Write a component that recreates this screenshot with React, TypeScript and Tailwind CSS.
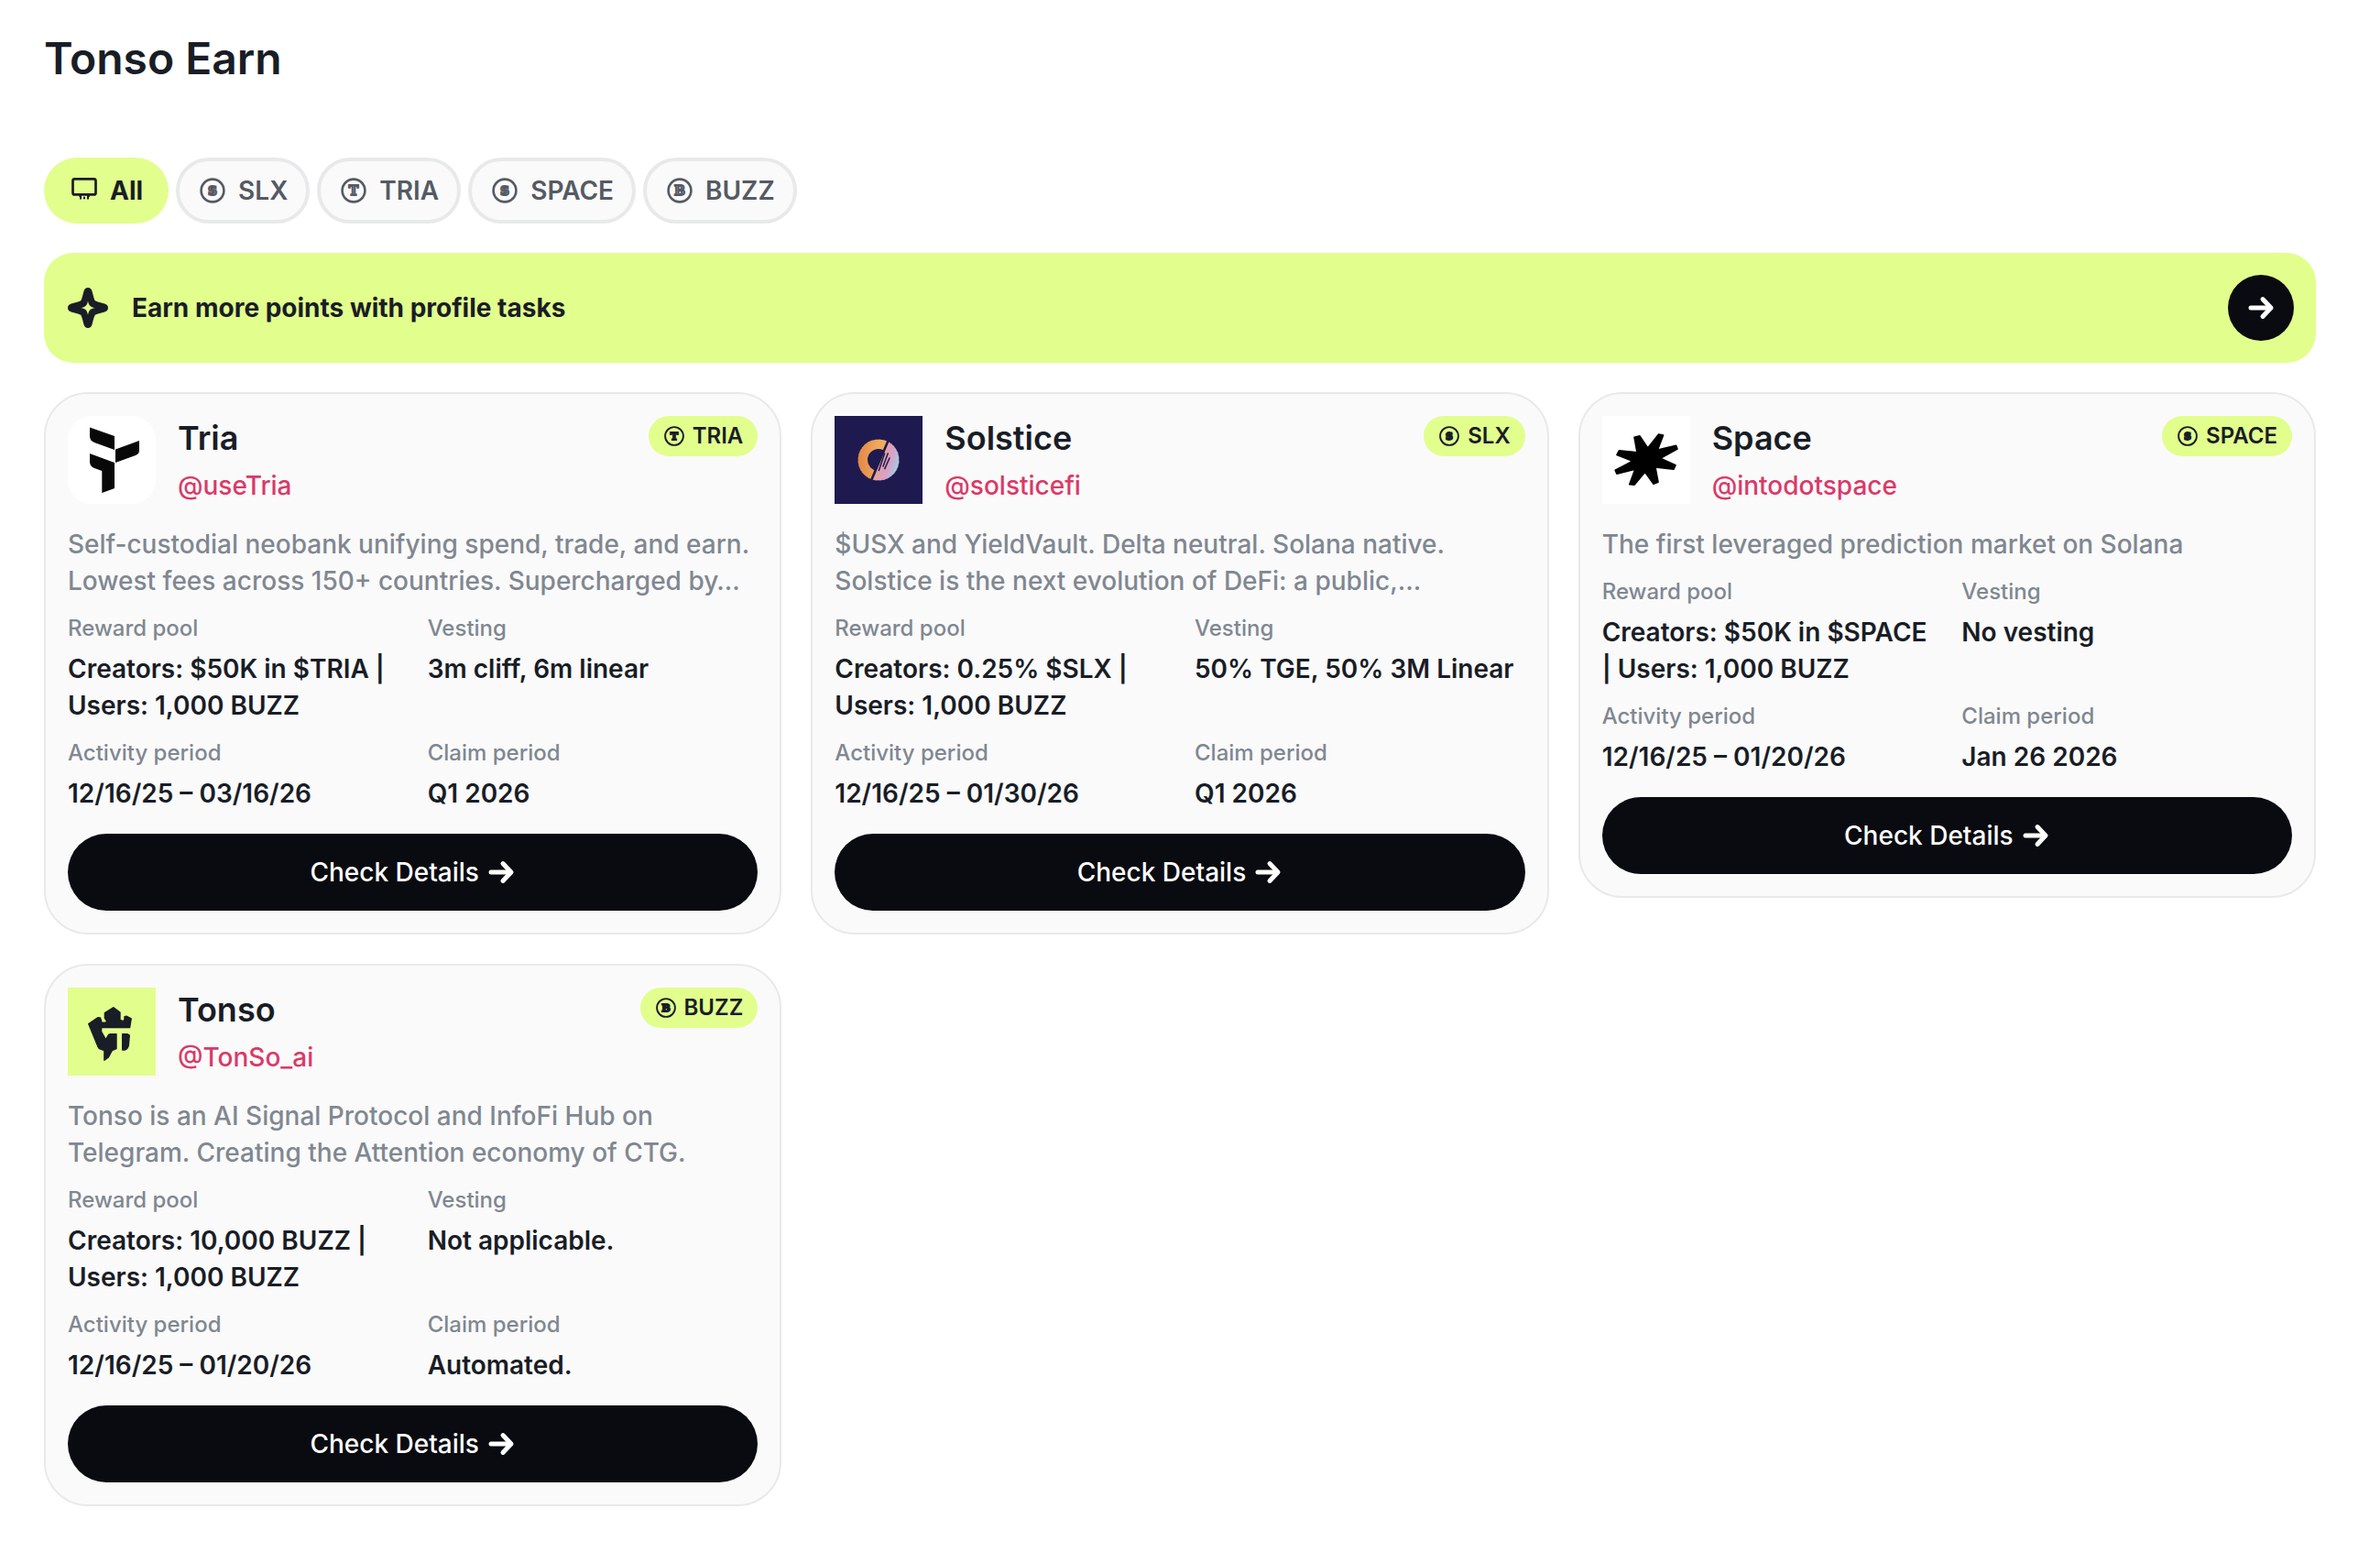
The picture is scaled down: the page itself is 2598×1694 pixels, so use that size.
import type { ReactNode } from "react";

type IconProps = { className?: string };

function ArrowIcon({ className }: IconProps) {
  return (
    <svg viewBox="0 0 32 32" className={className} fill="none" stroke="currentColor" strokeWidth="5" strokeLinecap="round" strokeLinejoin="round" aria-hidden="true">
      <path d="M5 16H26" />
      <path d="M18 6.6L27 16L18 25.4" />
    </svg>
  );
}

function MonitorIcon({ className }: IconProps) {
  return (
    <svg viewBox="0 0 32 32" className={className} fill="none" stroke="currentColor" strokeWidth="2.7" aria-hidden="true">
      <rect x="3.5" y="3.4" width="25" height="17" rx="2" />
      <path d="M12 20.5V25.6M20 20.5V25.6" strokeWidth="2" />
      <path d="M10.2 21.8H12M20 21.8H22M16 22.8V25.2" strokeWidth="2" />
    </svg>
  );
}

function CoinIcon({ letter, solid, className }: IconProps & { letter: string; solid?: boolean }) {
  return (
    <svg viewBox={solid ? "1 1 30 30" : "0 0 32 32"} className={className} fill="none" stroke="currentColor" aria-hidden="true">
      <circle cx="16" cy="16" r="12.4" strokeWidth={solid ? 2.3 : 2.6} />
      <text
        x="16"
        y="21"
        textAnchor="middle"
        fontFamily={letter === "S" ? "DejaVu Sans, sans-serif" : "DejaVu Serif, serif"}
        fontWeight="700"
        fontSize="14"
        strokeWidth={solid ? 2.2 : 1.9}
        fill={solid ? "currentColor" : "#9a9da2"}
      >
        {letter}
      </text>
    </svg>
  );
}

function SparkIcon({ className }: IconProps) {
  return (
    <svg viewBox="0 0 48 48" className={className} aria-hidden="true">
      <path
        fill="currentColor"
        d="M24 2C26.5 2 27.8 3.6 28.5 5.8C29.9 11 30.6 14.2 31.8 16.2C33.8 17.4 37 18.1 42.2 19.5C44.4 20.2 46 21.5 46 24C46 26.5 44.4 27.8 42.2 28.5C37 29.9 33.8 30.6 31.8 31.8C30.6 33.8 29.9 37 28.5 42.2C27.8 44.4 26.5 46 24 46C21.5 46 20.2 44.4 19.5 42.2C18.1 37 17.4 33.8 16.2 31.8C14.2 30.6 11 29.9 5.8 28.5C3.6 27.8 2 26.5 2 24C2 21.5 3.6 20.2 5.8 19.5C11 18.1 14.2 17.4 16.2 16.2C17.4 14.2 18.1 11 19.5 5.8C20.2 3.6 21.5 2 24 2Z"
      />
      <path fill="#e2fe8d" d="M24 16.4C25 21.4 26.6 23 31.6 24C26.6 25 25 26.6 24 31.6C23 26.6 21.4 25 16.4 24C21.4 23 23 21.4 24 16.4Z" />
    </svg>
  );
}

function TriaLogo() {
  return (
    <svg viewBox="0 0 96 96" className="size-24 shrink-0 rounded-[26px] bg-white" fill="#080808" role="img" aria-label="Tria">
      <path d="M24 12.5L51 22V37L29 29Q24 27 24 22Z" />
      <path d="M52 36.5L78 27V37.5Q78 41.5 74 43L52 51Z" />
      <path d="M24 41L51 51V79L37.3 84V60L29 57Q24 55 24 50Z" />
    </svg>
  );
}

function SolsticeLogo() {
  return (
    <svg viewBox="0 0 96 96" className="size-24 shrink-0 bg-[#1e1a50]" role="img" aria-label="Solstice">
      <defs>
        <linearGradient id="sol-left" x1="0" y1="0" x2="1" y2="0">
          <stop offset="0" stopColor="#e38747" />
          <stop offset="0.5" stopColor="#f0aa5c" />
          <stop offset="1" stopColor="#eeb068" />
        </linearGradient>
        <linearGradient id="sol-right" x1="0" y1="0.35" x2="1" y2="0.65">
          <stop offset="0.4" stopColor="#e8a67e" />
          <stop offset="0.75" stopColor="#d9a0c6" />
          <stop offset="1" stopColor="#9fd0e6" />
        </linearGradient>
        <clipPath id="sol-clip-left">
          <path d="M0 0H68.7L27.7 96H0Z" />
        </clipPath>
        <clipPath id="sol-clip-right">
          <path d="M96 0H71.5L30.5 96H96Z" />
        </clipPath>
      </defs>
      <path clipPath="url(#sol-clip-left)" fill="url(#sol-left)" fillRule="evenodd" d="M48 25.4a22.6 22.6 0 1 0 0 45.2a22.6 22.6 0 1 0 0-45.2ZM48 36a12 12 0 1 1 0 24a12 12 0 1 1 0-24Z" />
      <circle clipPath="url(#sol-clip-right)" cx="48" cy="48" r="22.6" fill="url(#sol-right)" />
      <circle cx="48" cy="48" r="22.8" fill="none" stroke="#1e1a50" strokeWidth="1" strokeDasharray="1.2 3.2" />
      <path d="M54.6 41L48.4 59.4M58.2 41L53 55M60 46L54.8 57.6" stroke="#1e1a50" strokeWidth="1.5" strokeLinecap="round" fill="none" />
    </svg>
  );
}

function SpaceLogo() {
  return (
    <svg viewBox="0 0 96 96" className="size-24 shrink-0 bg-white" role="img" aria-label="Space">
      <path
        fill="#000"
        stroke="#000"
        strokeWidth="1.6"
        strokeLinejoin="round"
        d="M35 23.2L41 21.9L49.7 35L61.6 20L66.6 21L60.5 37L80.6 32.4L82 36L63.5 46.3L80 53.8L78 58.2L58 56L61 72.2L56 74.2L46.7 61.2L35 75.3L29.8 74.6L35.8 58.2L15.9 63.2L14.2 59.3L33 49.3L16 42.4L18.4 37.8L38 39.8Z"
      />
    </svg>
  );
}

function TonsoLogo() {
  return (
    <svg viewBox="0 0 96 96" className="size-24 shrink-0 bg-[#e2fe8d]" fill="#191d26" stroke="#191d26" strokeWidth="1.4" strokeLinejoin="round" role="img" aria-label="Tonso">
      <path d="M50 21.7L57 27V35.4L60.4 36.4Q62 36 62 34V31.6L64 31.2L69.2 33.8L67.6 43.6H36.6V48.2L41.4 56.6L44.8 51.2L47 50.6H53V66.6L48.2 68.6L44.4 76L39.9 79.2V68.6L34.4 66.6L33 64.6L22.7 39.6L33 32.6L35.4 33L36.4 35.6L37 38.2L41.6 38.2L42.6 36.4L40.4 33.4V27.6Z" />
      <path d="M59.7 50.7H65L67.3 52L66.3 63Q65.6 67.2 62 68H59.7Z" />
    </svg>
  );
}

const filters = [
  { label: "SLX", letter: "S" },
  { label: "TRIA", letter: "T" },
  { label: "SPACE", letter: "S" },
  { label: "BUZZ", letter: "B" },
];

type Campaign = {
  name: string;
  handle: string;
  token: string;
  letter: string;
  logo: ReactNode;
  about: string;
  pool: string;
  vesting: string;
  activity: string;
  claim: string;
};

const campaigns: Campaign[] = [
  {
    name: "Tria",
    handle: "@useTria",
    token: "TRIA",
    letter: "T",
    logo: <TriaLogo />,
    about: "Self-custodial neobank unifying spend, trade, and earn. Lowest fees across 150+ countries. Supercharged by…",
    pool: "Creators: $50K in $TRIA |\nUsers: 1,000 BUZZ",
    vesting: "3m cliff, 6m linear",
    activity: "12/16/25 – 03/16/26",
    claim: "Q1 2026",
  },
  {
    name: "Solstice",
    handle: "@solsticefi",
    token: "SLX",
    letter: "S",
    logo: <SolsticeLogo />,
    about: "$USX and YieldVault. Delta neutral. Solana native.\nSolstice is the next evolution of DeFi: a public,…",
    pool: "Creators: 0.25% $SLX |\nUsers: 1,000 BUZZ",
    vesting: "50% TGE, 50% 3M Linear",
    activity: "12/16/25 – 01/30/26",
    claim: "Q1 2026",
  },
  {
    name: "Space",
    handle: "@intodotspace",
    token: "SPACE",
    letter: "S",
    logo: <SpaceLogo />,
    about: "The first leveraged prediction market on Solana",
    pool: "Creators: $50K in $SPACE\n| Users: 1,000 BUZZ",
    vesting: "No vesting",
    activity: "12/16/25 – 01/20/26",
    claim: "Jan 26 2026",
  },
  {
    name: "Tonso",
    handle: "@TonSo_ai",
    token: "BUZZ",
    letter: "B",
    logo: <TonsoLogo />,
    about: "Tonso is an AI Signal Protocol and InfoFi Hub on\nTelegram. Creating the Attention economy of CTG.",
    pool: "Creators: 10,000 BUZZ |\nUsers: 1,000 BUZZ",
    vesting: "Not applicable.",
    activity: "12/16/25 – 01/20/26",
    claim: "Automated.",
  },
];

function Fact({ label, value }: { label: string; value: string }) {
  return (
    <div className="flex flex-col gap-2">
      <dt className="text-2xl leading-8 font-medium text-[#808791]">{label}</dt>
      <dd className="text-[28px] leading-10 font-semibold whitespace-pre-line">{value}</dd>
    </div>
  );
}

function CampaignCard({ c }: { c: Campaign }) {
  return (
    <article className="flex flex-col rounded-[48px] border-2 border-[#e8e9ea] bg-[#fafafa] p-6">
      <header className="flex items-start gap-6">
        {c.logo}
        <div className="flex min-w-0 flex-1 flex-col gap-2">
          <h2 className="text-4xl leading-12 font-semibold">{c.name}</h2>
          <a href="#" className="self-start text-[28px] leading-10 font-medium text-[#d93a69]">{c.handle}</a>
        </div>
        <span className="flex h-11 items-center gap-2 rounded-full bg-[#e2fe8d] px-4 text-2xl font-semibold">
          <CoinIcon letter={c.letter} solid className="size-6" />
          {c.token}
        </span>
      </header>
      <p className="mt-6 line-clamp-2 text-[28px] leading-10 font-medium whitespace-pre-line text-[#808791]">{c.about}</p>
      <dl className="mt-4 grid grid-cols-2 gap-x-8 gap-y-4">
        <Fact label="Reward pool" value={c.pool} />
        <Fact label="Vesting" value={c.vesting} />
        <Fact label="Activity period" value={c.activity} />
        <Fact label="Claim period" value={c.claim} />
      </dl>
      <button type="button" className="mt-6 flex h-21 items-center justify-center gap-2 rounded-full bg-[#0a0b10] text-[28px] font-medium text-white">
        Check Details
        <ArrowIcon className="size-8" />
      </button>
    </article>
  );
}

export default function App() {
  return (
    <main className="min-h-screen bg-white py-9 pr-[70px] pl-12 font-['Inter',sans-serif] text-[#191d26]">
      <h1 className="text-5xl leading-14 font-semibold">Tonso Earn</h1>

      <nav aria-label="Campaign filter" className="mt-20 flex gap-2">
        <button type="button" aria-pressed="true" className="flex h-18 items-center gap-3 rounded-full bg-[#e2fe8d] px-7 text-[28px] font-bold">
          <MonitorIcon className="size-8" />
          All
        </button>
        {filters.map((f) => (
          <button key={f.label} type="button" aria-pressed="false" className="flex h-18 items-center gap-3 rounded-full border-4 border-[#e8e9ea] bg-[#fafafa] px-5 text-[28px] font-semibold text-[#555a63]">
            <CoinIcon letter={f.letter} className="size-8" />
            {f.label}
          </button>
        ))}
      </nav>

      <section className="mt-8 flex items-center gap-6 rounded-[32px] bg-[#e2fe8d] p-6">
        <SparkIcon className="size-12" />
        <p className="flex-1 text-[28px] leading-10 font-bold">Earn more points with profile tasks</p>
        <button type="button" aria-label="Open profile tasks" className="flex size-18 items-center justify-center rounded-full bg-[#0a0b10] text-white">
          <ArrowIcon className="size-8" />
        </button>
      </section>

      <section className="mt-8 grid grid-cols-3 items-start gap-8">
        {campaigns.map((c) => (
          <CampaignCard key={c.name} c={c} />
        ))}
      </section>
    </main>
  );
}
